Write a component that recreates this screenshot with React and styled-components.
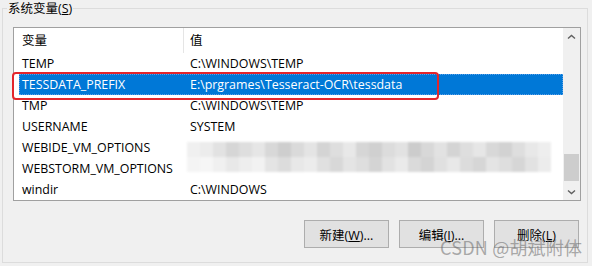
import React from 'react';
import styled, { createGlobalStyle } from 'styled-components';

const GlobalStyle = createGlobalStyle`
  html, body {
    margin: 0;
    padding: 0;
    background: #f0f0f0;
  }

  body {
    font-family: "Open Sans", "Noto Sans CJK SC", sans-serif;
    color: #000000;
  }
`;

const Screen = styled.div`
  background: #f0f0f0;
  box-sizing: border-box;
  height: 266px;
  overflow: hidden;
  padding: 8px 4px 0 2px;
  position: relative;
  width: 592px;
`;

const GroupBox = styled.div`
  border: 1px solid #dcdcdc;
  box-sizing: border-box;
  height: 255px;
  padding: 18px 6px 0 10px;
  position: relative;
`;

const Legend = styled.div`
  background: #f0f0f0;
  font-size: 12.5px;
  left: 4px;
  line-height: 17px;
  padding: 0 1px;
  position: absolute;
  top: -9px;
`;

const ListBox = styled.div`
  background: #ffffff;
  border: 1px solid #a0a0a0;
  box-sizing: border-box;
  display: flex;
  height: 174px;
  width: 568px;
`;

const ListContent = styled.div`
  flex: 1;
  font-size: 12.4px;
`;

const Header = styled.div`
  display: grid;
  grid-template-columns: 165px 1fr;
  height: 25px;
  line-height: 25px;
  margin-left: 5px;
`;

const HeaderCell = styled.div`
  border-right: ${({ $sep }) => ($sep ? '1px solid #e5e5e5' : 'none')};
  font-size: 12.5px;
  padding-left: ${({ $sep }) => ($sep ? '3px' : '6px')};
`;

const Row = styled.div`
  background: ${({ $selected }) => ($selected ? '#0078d7' : 'transparent')};
  box-sizing: border-box;
  color: ${({ $selected }) => ($selected ? '#ffffff' : '#000000')};
  display: grid;
  grid-template-columns: 165px 1fr;
  height: 21px;
  line-height: 21px;
  margin-left: 5px;
  outline: ${({ $selected }) => ($selected ? '1px dotted #5aa0e8' : 'none')};
  outline-offset: -1px;
  white-space: nowrap;
`;

const Cell = styled.div`
  overflow: hidden;
  padding-left: ${({ $value }) => ($value ? '6px' : '3px')};
`;

const ScrollBar = styled.div`
  background: #f0f0f0;
  display: flex;
  flex-direction: column;
  width: 17px;
`;

const Arrow = styled.div`
  align-items: center;
  display: flex;
  height: 17px;
  justify-content: center;
`;

const Track = styled.div`
  flex: 1;
`;

const Thumb = styled.div`
  background: #cdcdcd;
  height: 27px;
  margin: 109px 1px 0;
`;

const ButtonRow = styled.div`
  display: flex;
  gap: 10px;
  justify-content: flex-end;
  margin-right: 2px;
  margin-top: 19px;
`;

const Button = styled.button`
  background: #e1e1e1;
  border: 1px solid #adadad;
  border-radius: 0;
  box-sizing: border-box;
  color: #000000;
  font-family: "Open Sans", "Noto Sans CJK SC", sans-serif;
  font-size: 12.5px;
  height: 28px;
  padding: 0;
  width: 85px;
`;

const Key = styled.span`
  text-decoration: underline;
`;

const Annotation = styled.div`
  border: 2.5px solid #e3262c;
  border-radius: 4px;
  box-sizing: border-box;
  height: 28px;
  left: 12px;
  position: absolute;
  top: 72px;
  width: 427px;
`;

const Mosaic = styled.div`
  display: grid;
  filter: blur(1.2px);
  grid-template-columns: repeat(28, 13px);
  grid-auto-rows: 15px;
  left: 187px;
  position: absolute;
  top: 142px;
`;

const Tile = styled.div`
  background: ${({ $shade }) => `rgb(${$shade}, ${$shade}, ${$shade})`};
`;

const Watermark = styled.div`
  color: rgba(105, 105, 105, 0.55);
  font-family: "Noto Sans CJK SC", sans-serif;
  font-size: 18px;
  left: 440px;
  letter-spacing: 0.2px;
  line-height: 20px;
  position: absolute;
  top: 237px;
`;

const rows = [
  ['TEMP', 'C:\\WINDOWS\\TEMP'],
  ['TESSDATA_PREFIX', 'E:\\prgrames\\Tesseract-OCR\\tessdata', true],
  ['TMP', 'C:\\WINDOWS\\TEMP'],
  ['USERNAME', 'SYSTEM'],
  ['WEBIDE_VM_OPTIONS', ''],
  ['WEBSTORM_VM_OPTIONS', ''],
  ['windir', 'C:\\WINDOWS'],
];

const shades = [
  240, 236, 226, 214, 222, 230, 216, 206, 218, 228, 212, 222, 232, 214,
  208, 220, 226, 204, 216, 226, 212, 222, 230, 216, 210, 222, 232, 238,
  244, 246, 240, 232, 238, 242, 228, 220, 232, 236, 224, 216, 228, 222,
  212, 226, 234, 218, 212, 224, 232, 220, 214, 228, 222, 214, 226, 236,
];

const Chevron = ({ down }) => (
  <svg width="9" height="6" viewBox="0 0 9 6">
    <polyline
      points={down ? '1,1.5 4.5,4.5 8,1.5' : '1,4.5 4.5,1.5 8,4.5'}
      fill="none"
      stroke="#606060"
      strokeWidth="1.4"
    />
  </svg>
);

export default function App() {
  return (
    <Screen>
      <GlobalStyle />
      <GroupBox>
        <Legend>
          系统变量(<Key>S</Key>)
        </Legend>
        <ListBox>
          <ListContent>
            <Header>
              <HeaderCell $sep>变量</HeaderCell>
              <HeaderCell>值</HeaderCell>
            </Header>
            {rows.map(([name, value, selected]) => (
              <Row key={name} $selected={selected}>
                <Cell>{name}</Cell>
                <Cell $value>{value}</Cell>
              </Row>
            ))}
          </ListContent>
          <ScrollBar>
            <Arrow>
              <Chevron />
            </Arrow>
            <Track>
              <Thumb />
            </Track>
            <Arrow>
              <Chevron down />
            </Arrow>
          </ScrollBar>
        </ListBox>
        <ButtonRow>
          <Button>
            新建(<Key>W</Key>)...
          </Button>
          <Button>
            编辑(<Key>I</Key>)...
          </Button>
          <Button>
            删除(<Key>L</Key>)
          </Button>
        </ButtonRow>
      </GroupBox>
      <Mosaic>
        {shades.map((shade, i) => (
          <Tile key={i} $shade={shade} />
        ))}
      </Mosaic>
      <Annotation />
      <Watermark>CSDN @胡斌附体</Watermark>
    </Screen>
  );
}
